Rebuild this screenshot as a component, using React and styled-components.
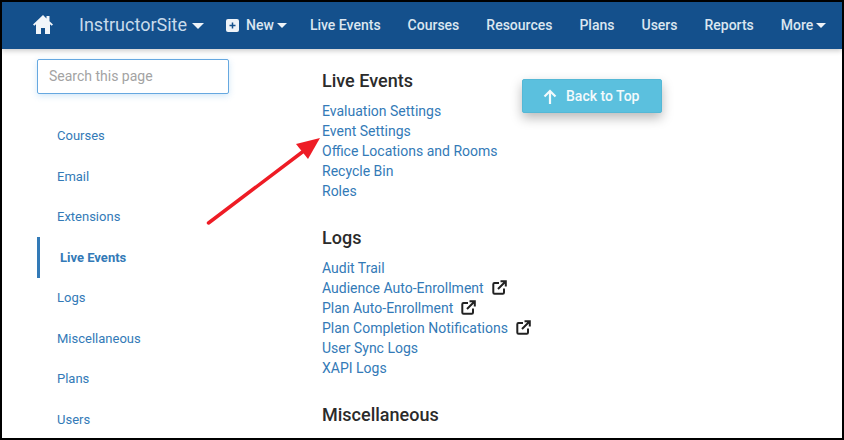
import React from "react";
import styled, { createGlobalStyle } from "styled-components";

const Global = createGlobalStyle`
  html, body { margin: 0; padding: 0; background: #fff; }
  body { font-family: Roboto, "Liberation Sans", sans-serif; }
`;

const Frame = styled.div`
  position: relative;
  width: 844px;
  height: 440px;
  box-sizing: border-box;
  border: 2px solid #000;
  overflow: hidden;
  background: #fff;
`;

const TopBar = styled.header`
  height: 47px;
  background: #14508c;
  box-shadow: 0 2px 5px rgba(0, 0, 0, 0.2);
  display: flex;
  align-items: center;
  padding-left: 31px;
  color: #dbe6f0;
  position: relative;
`;

const HomeIcon = styled.svg`
  width: 20px;
  height: 19px;
  fill: #f2f6fa;
  margin-right: 26px;
  margin-bottom: 3px;
`;

const Brand = styled.span`
  display: flex;
  align-items: center;
  gap: 5px;
  font-size: 18px;
  color: #c9dbeb;
  margin-right: 22px;
  margin-bottom: 2px;
`;

const Caret = styled.i`
  display: inline-block;
  width: 0;
  height: 0;
  border-left: ${(p) => p.$size}px solid transparent;
  border-right: ${(p) => p.$size}px solid transparent;
  border-top: ${(p) => p.$size}px solid #eef3f8;
  margin-top: 2px;
`;

const PlusBox = styled.svg`
  width: 13px;
  height: 13px;
  margin-right: 7px;
`;

const NavItem = styled.span`
  display: flex;
  align-items: center;
  gap: 3px;
  font-size: 14px;
  font-weight: 500;
  color: #dbe6f0;
  margin-right: ${(p) => p.$gap}px;
  margin-bottom: 2px;
  white-space: nowrap;
`;

const Body = styled.div`
  display: flex;
  align-items: flex-start;
`;

const Sidebar = styled.aside`
  width: 320px;
  flex: none;
  padding: 10px 0 0 35px;
  box-sizing: border-box;
`;

const Search = styled.input`
  display: block;
  width: 192px;
  height: 35px;
  box-sizing: border-box;
  border: 1px solid #66a8e0;
  border-radius: 2px;
  box-shadow: 0 2px 6px rgba(102, 175, 233, 0.3);
  padding: 0 11px 2px;
  font: 14px Roboto, sans-serif;
  outline: none;
  &::placeholder { color: #a3a3a3; opacity: 1; }
`;

const SideNav = styled.nav`
  margin-top: 21.5px;
  display: flex;
  flex-direction: column;
`;

const SideItem = styled.a`
  height: 40.5px;
  display: flex;
  align-items: center;
  box-sizing: border-box;
  font-size: 13px;
  font-weight: ${(p) => (p.$active ? 700 : 400)};
  color: #337ab7;
  padding-left: 20px;
  border-left: ${(p) => (p.$active ? "3px solid #337ab7" : "0")};
`;

const Main = styled.main`
  padding-top: 22px;
  display: flex;
  flex-direction: column;
`;

const Group = styled.section`
  margin-bottom: 27px;
`;

const Heading = styled.h2`
  margin: 0 0 10px;
  font-size: 18px;
  line-height: 20px;
  font-weight: 500;
  color: #2b2b2b;
`;

const LinkRow = styled.a`
  display: flex;
  align-items: center;
  gap: 8px;
  height: 20px;
  font-size: 14px;
  color: #337ab7;
`;

const ExtIcon = styled.svg`
  width: 15px;
  height: 15px;
  fill: none;
  stroke: #222;
  stroke-width: 2;
  margin-top: -2px;
`;

const BackToTop = styled.button`
  position: absolute;
  left: 520px;
  top: 77px;
  width: 140px;
  height: 34px;
  border: 1px solid #54b8d6;
  border-radius: 2px;
  background: #5bc0de;
  color: #f3fafc;
  font: 500 14px Roboto, sans-serif;
  display: flex;
  align-items: center;
  gap: 9px;
  padding: 0 0 0 20px;
  box-shadow: 0 5px 12px rgba(0, 0, 0, 0.28);
`;

const ArrowOverlay = styled.svg`
  position: absolute;
  left: -2px;
  top: -2px;
  width: 844px;
  height: 440px;
  pointer-events: none;
`;

const ExternalLink = () => (
  <ExtIcon viewBox="0 0 15 15">
    <path d="M7 3H2.500A1.200 1.200 0 0 0 1.300 4.200V12.500A1.200 1.200 0 0 0 2.500 13.700H10.800A1.200 1.200 0 0 0 12 12.500V8.500" />
    <path d="M6 9L13 2M8.500 1.200H13.800V6.500" />
  </ExtIcon>
);

const sideItems = ["Courses", "Email", "Extensions", "Live Events", "Logs", "Miscellaneous", "Plans", "Users"];

export default function App() {
  return (
    <>
      <Global />
      <Frame>
        <TopBar>
          <HomeIcon viewBox="0 0 20 19">
            <path d="M10 0L0 9.500l1.300 1.300L3 9.300V19h5v-6h4v6h5V9.300l1.700 1.500L20 9.500 16.500 6.200V1h-3v2.400z" />
          </HomeIcon>
          <Brand>
            InstructorSite <Caret $size={6} />
          </Brand>
          <PlusBox viewBox="0 0 13 13">
            <rect width="13" height="13" rx="2" fill="#eef3f8" />
            <path d="M6.500 3.500v6M3.500 6.500h6" stroke="#14508c" strokeWidth="1.500" />
          </PlusBox>
          <NavItem $gap={23}>
            New <Caret $size={5} />
          </NavItem>
          <NavItem $gap={27}>Live Events</NavItem>
          <NavItem $gap={27}>Courses</NavItem>
          <NavItem $gap={27}>Resources</NavItem>
          <NavItem $gap={27}>Plans</NavItem>
          <NavItem $gap={27}>Users</NavItem>
          <NavItem $gap={27}>Reports</NavItem>
          <NavItem $gap={0}>
            More <Caret $size={5} />
          </NavItem>
        </TopBar>
        <Body>
          <Sidebar>
            <Search placeholder="Search this page" readOnly />
            <SideNav>
              {sideItems.map((s) => (
                <SideItem key={s} $active={s === "Live Events"}>
                  {s}
                </SideItem>
              ))}
            </SideNav>
          </Sidebar>
          <Main>
            <Group>
              <Heading>Live Events</Heading>
              <LinkRow>Evaluation Settings</LinkRow>
              <LinkRow>Event Settings</LinkRow>
              <LinkRow>Office Locations and Rooms</LinkRow>
              <LinkRow>Recycle Bin</LinkRow>
              <LinkRow>Roles</LinkRow>
            </Group>
            <Group>
              <Heading>Logs</Heading>
              <LinkRow>Audit Trail</LinkRow>
              <LinkRow>Audience Auto-Enrollment <ExternalLink /></LinkRow>
              <LinkRow>Plan Auto-Enrollment <ExternalLink /></LinkRow>
              <LinkRow>Plan Completion Notifications <ExternalLink /></LinkRow>
              <LinkRow>User Sync Logs</LinkRow>
              <LinkRow>XAPI Logs</LinkRow>
            </Group>
            <Heading>Miscellaneous</Heading>
          </Main>
        </Body>
        <BackToTop>
          <svg width="14" height="15" viewBox="0 0 14 15" fill="none" stroke="#f3fafc" strokeWidth="2.200">
            <path d="M7 15V2M1.500 7.500L7 2l5.500 5.500" />
          </svg>
          Back to Top
        </BackToTop>
        <ArrowOverlay viewBox="0 0 844 440">
          <path d="M208.500 223L305 150" stroke="#ee1c25" strokeWidth="3.500" strokeLinecap="round" />
          <polygon points="320,138 296,144 308,159" fill="#ee1c25" />
        </ArrowOverlay>
      </Frame>
    </>
  );
}
